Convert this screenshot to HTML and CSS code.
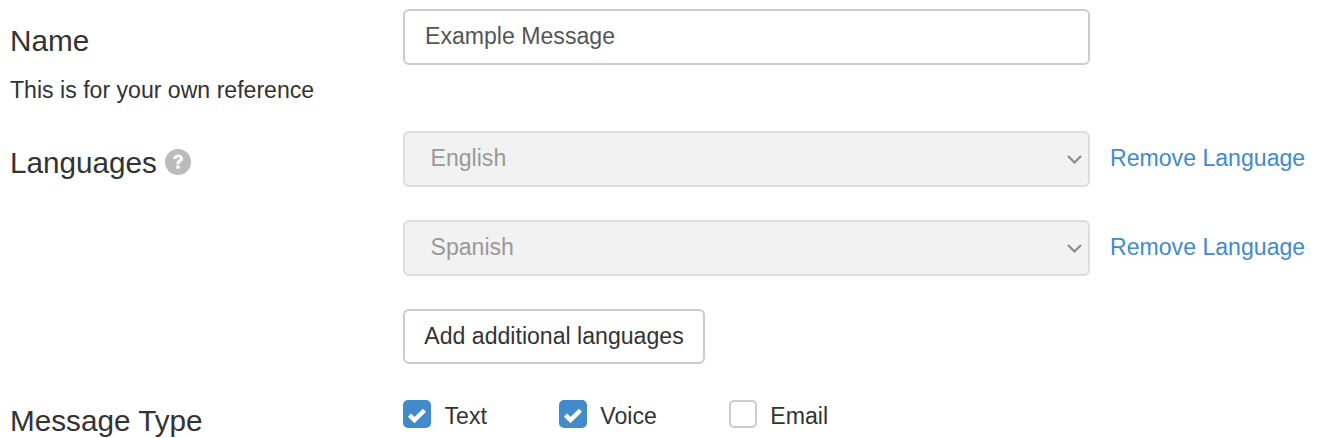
FILE: index.html
```html
<!DOCTYPE html>
<html lang="en">
<head>
    <meta charset="UTF-8">
    <meta name="viewport" content="width=device-width, initial-scale=1.0">
    <title>Message Settings</title>
    <link rel="stylesheet" href="styles.css">
</head>
<body>
    <form class="form">
        <div class="row row-name">
            <div>
                <label class="field-label" for="nameInput">Name</label>
                <p class="help-text">This is for your own reference</p>
            </div>
            <div>
                <input class="text-input" id="nameInput" type="text" value="Example Message">
            </div>
        </div>

        <div class="row row-languages">
            <div class="field-label">
                Languages
                <svg class="help-icon" viewBox="0 0 24 24" aria-hidden="true">
                    <circle cx="12" cy="12" r="12" fill="#bbb"/>
                    <path d="M7.500 9.200C7.800 6.500 9.700 5 12.300 5c2.700 0 4.500 1.600 4.500 3.700 0 1.700-.9 2.600-2.200 3.400-.8.500-1.100.9-1.100 1.900h-3c0-2 .6-2.900 1.800-3.700.9-.6 1.300-.9 1.300-1.500 0-.7-.6-1.200-1.400-1.200-.9 0-1.500.6-1.700 1.600z" fill="#fff"/>
                    <rect x="10.500" y="15.200" width="3" height="3" fill="#fff"/>
                </svg>
            </div>
            <div>
                <div class="control-line language-line">
                    <div class="select-wrap">
                        <select class="select-input" disabled>
                            <option>English</option>
                        </select>
                        <svg class="select-arrow" viewBox="0 0 15 9" aria-hidden="true"><path d="M1 1l6.500 6.500L14 1" fill="none" stroke="#888" stroke-width="2"/></svg>
                    </div>
                    <a class="remove-link" href="#">Remove Language</a>
                </div>
                <div class="control-line language-line">
                    <div class="select-wrap">
                        <select class="select-input" disabled>
                            <option>Spanish</option>
                        </select>
                        <svg class="select-arrow" viewBox="0 0 15 9" aria-hidden="true"><path d="M1 1l6.500 6.500L14 1" fill="none" stroke="#888" stroke-width="2"/></svg>
                    </div>
                    <a class="remove-link" href="#">Remove Language</a>
                </div>
                <button class="add-button" type="button">Add additional languages</button>
            </div>
        </div>

        <div class="row">
            <div class="field-label">Message Type</div>
            <div class="check-group">
                <label class="check-item">
                    <input class="check-input" type="checkbox" checked>
                    <span class="check-box"><svg viewBox="0 0 16 16" aria-hidden="true"><path d="M3 8.800l3.300 3.200L13 5.500" fill="none" stroke="#fff" stroke-width="3"/></svg></span>
                    <span class="check-text">Text</span>
                </label>
                <label class="check-item">
                    <input class="check-input" type="checkbox" checked>
                    <span class="check-box"><svg viewBox="0 0 16 16" aria-hidden="true"><path d="M3 8.800l3.300 3.200L13 5.500" fill="none" stroke="#fff" stroke-width="3"/></svg></span>
                    <span class="check-text">Voice</span>
                </label>
                <label class="check-item">
                    <input class="check-input" type="checkbox">
                    <span class="check-box"><svg viewBox="0 0 16 16" aria-hidden="true"><path d="M3 8.800l3.300 3.200L13 5.500" fill="none" stroke="#fff" stroke-width="3"/></svg></span>
                    <span class="check-text">Email</span>
                </label>
            </div>
        </div>
    </form>
</body>
</html>
```

FILE: styles.css
```css
* {
    box-sizing: border-box;
}
html, body {
    height: 100%;
    overflow: hidden;
}
body {
    font-family: "Liberation Sans", Arial, sans-serif;
    font-size: 23.1px;
    color: #333;
    margin: 0;
    background-color: #fff;
}
.form {
    padding: 9px 0 0 10px;
}
.row {
    display: grid;
    grid-template-columns: 393px 1fr;
}
.row-name {
    height: 122px;
}
.row-languages {
    margin-bottom: 34px;
}
.field-label {
    display: block;
    font-size: 29.7px;
    line-height: 46px;
}
.row-name .field-label,
.row-languages .field-label {
    padding-top: 9px;
}
.help-text {
    line-height: 34px;
    margin: 9px 0 0;
}
.help-icon {
    width: 26px;
    height: 26px;
    vertical-align: -2px;
}
.control-line {
    display: flex;
    align-items: center;
    gap: 20px;
}
.language-line {
    margin-bottom: 33px;
}
.text-input,
.select-input {
    display: block;
    width: 687px;
    height: 56px;
    border: 2px solid #ccc;
    border-radius: 6px;
    font-family: inherit;
    font-size: 23.1px;
    color: #555;
    background-color: #fff;
    padding: 0 20px 2px;
}
.select-wrap {
    position: relative;
    width: 687px;
    height: 56px;
}
.select-input {
    appearance: none;
    -webkit-appearance: none;
    background-color: #f2f2f2;
    border-color: #ddd;
    color: #999;
    padding: 0 25.5px 2px;
    opacity: 1;
}
.select-arrow {
    position: absolute;
    right: 8px;
    top: 24px;
    width: 15px;
    height: 9px;
}
.remove-link {
    color: #428bca;
    text-decoration: none;
    white-space: nowrap;
    padding-bottom: 1px;
}
.add-button {
    display: block;
    width: 302px;
    height: 55px;
    border: 2px solid #ccc;
    border-radius: 6px;
    background-color: #fff;
    font-family: inherit;
    font-size: 23.1px;
    color: #333;
    padding: 0;
}
.check-group {
    display: flex;
    padding-top: 2px;
}
.check-item {
    display: flex;
    align-items: center;
    height: 28px;
    gap: 13.5px;
    margin-right: 72px;
}
.check-input {
    display: none;
}
.check-box {
    display: block;
    width: 28px;
    height: 28px;
    border: 2px solid #ccc;
    border-radius: 5px;
    background-color: #fff;
}
.check-box svg {
    display: none;
    width: 24px;
    height: 24px;
}
.check-input:checked + .check-box {
    background-color: #428bca;
    border-color: #428bca;
}
.check-input:checked + .check-box svg {
    display: block;
}
.check-text {
    padding-top: 4px;
}
```
